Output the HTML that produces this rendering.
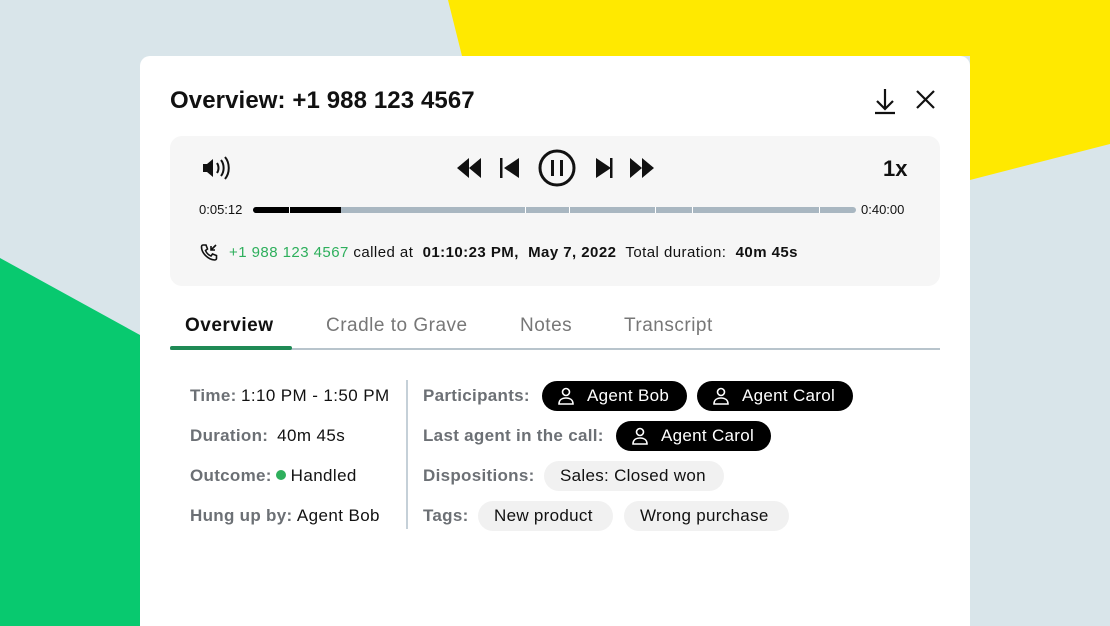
<!DOCTYPE html>
<html><head><style>
*{margin:0;padding:0;box-sizing:border-box}
html,body{width:1110px;height:626px;overflow:hidden}
body{position:relative;background:#d9e5ea;font-family:"Liberation Sans",sans-serif;color:#111}
.a{position:absolute;white-space:nowrap}
.card{position:absolute;left:140px;top:56px;width:830px;height:570px;background:#fff;border-radius:10px 10px 0 0}
.lbl{color:#6c7075;font-weight:bold;font-size:17px;letter-spacing:0.3px}
.v{font-size:17px;color:#111;letter-spacing:0.4px}
.pill{position:absolute;height:30px;border-radius:15px;font-size:17px;line-height:30px;padding:0 16px;white-space:nowrap;letter-spacing:0.3px}
.dark{background:#000;color:#fff}
.light{background:#f1f1f1;color:#111}
.tab{position:absolute;top:315px;font-size:19px;color:#777;letter-spacing:0.5px}
</style></head><body>
<svg class="a" style="left:0;top:0" width="1110" height="626">
<polygon points="448,0 1110,0 1110,144 970,180 970,56 462,56" fill="#ffe900"/>
<polygon points="0,258 140,335 140,626 0,626" fill="#08c96f"/>
</svg>
<div class="card"></div>
<div class="a" style="left:170px;top:87px;font-size:24px;font-weight:bold;letter-spacing:0.1px">Overview: +1 988 123 4567</div>
<svg class="a" style="left:872px;top:86px" width="70" height="30" fill="none" stroke="#111" stroke-width="2.2">
<path d="M13 3v20M5 15l8 8 8-8M3 27h20"/>
<path d="M45 5l17 17M62 5L45 22"/>
</svg>
<div class="a" style="left:170px;top:136px;width:770px;height:150px;background:#f6f6f6;border-radius:12px"></div>
<svg class="a" style="left:200px;top:152px" width="32" height="32" fill="#111" stroke="#111" stroke-width="2">
<path d="M3 12h4l6-5v18l-6-5H3z" stroke="none"/>
<path d="M17 11c2 3 2 7 0 10M21 8c3.5 4.5 3.5 11.5 0 16M25 5c5 6 5 16 0 22" fill="none"/>
</svg>
<svg class="a" style="left:455px;top:146px" width="205" height="44" fill="#111">
<path d="M14 12v20L2 22zM26 12v20L14 22z"/>
<rect x="45" y="12" width="2.5" height="20"/><path d="M64 12v20L49 22z"/>
<circle cx="102" cy="22" r="17" fill="none" stroke="#111" stroke-width="3"/>
<rect x="96" y="14" width="3" height="16"/><rect x="105" y="14" width="3" height="16"/>
<path d="M141 12v20l15-10z"/><rect x="155" y="12" width="2.5" height="20"/>
<path d="M175 12v20l12-10zM187 12v20l12-10z"/>
</svg>
<div class="a" style="left:883px;top:156px;font-size:22px;font-weight:bold">1x</div>
<div class="a" style="left:199px;top:202px;font-size:13px">0:05:12</div>
<div class="a" style="left:861px;top:202px;font-size:13px">0:40:00</div>
<div class="a" style="left:253px;top:207px;width:603px;height:6px;border-radius:3px;background:#a9b7c1"></div>
<div class="a" style="left:253px;top:207px;width:88px;height:6px;border-radius:3px 0 0 3px;background:#000"></div>
<div class="a" style="left:289px;top:207px;width:1px;height:6px;background:#fff"></div>
<div class="a" style="left:525px;top:207px;width:1px;height:6px;background:#fff"></div>
<div class="a" style="left:569px;top:207px;width:1px;height:6px;background:#fff"></div>
<div class="a" style="left:655px;top:207px;width:1px;height:6px;background:#fff"></div>
<div class="a" style="left:692px;top:207px;width:1px;height:6px;background:#fff"></div>
<div class="a" style="left:819px;top:207px;width:1px;height:6px;background:#fff"></div>
<svg class="a" style="left:200px;top:243px" width="18" height="18" fill="none" stroke="#111" stroke-width="1.6">
<path d="M3 2l3 0 1.5 4-2 1.5c1 2.5 3 4.5 5.5 5.5l1.5-2 4 1.5v3c0 1-1 1.5-2 1.5C8 16.5 1.5 10 1.5 4c0-1 .5-2 1.5-2z"/>
<path d="M16 2l-5 5M11 3v4h4"/>
</svg>
<div class="a" style="left:229px;top:244px;font-size:15px;letter-spacing:0.45px"><span style="color:#2eaf5c">+1 988 123 4567</span>&nbsp;called at &nbsp;<b>01:10:23 PM, &nbsp;May 7, 2022</b>&nbsp; Total duration: &nbsp;<b>40m 45s</b></div>
<div class="tab" style="left:185px;color:#111;font-weight:bold">Overview</div>
<div class="tab" style="left:326px">Cradle to Grave</div>
<div class="tab" style="left:520px">Notes</div>
<div class="tab" style="left:624px">Transcript</div>
<div class="a" style="left:170px;top:348px;width:770px;height:2px;background:#b8c4cc"></div>
<div class="a" style="left:170px;top:346px;width:122px;height:4px;border-radius:2px;background:#1f8a55"></div>
<div class="a" style="left:406px;top:380px;width:2px;height:149px;background:#c5d0d8"></div>
<div class="a" style="left:190px;top:386px"><span class="lbl">Time:</span> <span class="v">1:10 PM - 1:50 PM</span></div>
<div class="a" style="left:190px;top:426px"><span class="lbl">Duration:</span>&nbsp; <span class="v">40m 45s</span></div>
<div class="a" style="left:190px;top:466px"><span class="lbl">Outcome:</span> <span style="display:inline-block;width:10px;height:10px;border-radius:5px;background:#2eaf5c;vertical-align:1px"></span> <span class="v">Handled</span></div>
<div class="a" style="left:190px;top:506px"><span class="lbl">Hung up by:</span> <span class="v">Agent Bob</span></div>
<div class="a lbl" style="left:423px;top:386px">Participants:</div>
<div class="a lbl" style="left:423px;top:426px">Last agent in the call:</div>
<div class="a lbl" style="left:423px;top:466px">Dispositions:</div>
<div class="a lbl" style="left:423px;top:506px">Tags:</div>
<div class="pill dark" style="left:542px;top:381px;width:145px;padding-left:45px">Agent Bob</div>
<div class="pill dark" style="left:697px;top:381px;width:156px;padding-left:45px">Agent Carol</div>
<div class="pill dark" style="left:616px;top:421px;width:155px;padding-left:45px">Agent Carol</div>
<svg class="a" style="left:556px;top:386px" width="20" height="20" fill="none" stroke="#fff" stroke-width="1.6"><circle cx="10" cy="6" r="3.5"/><path d="M3 18c0-4 3-6 7-6s7 2 7 6z"/></svg>
<svg class="a" style="left:711px;top:386px" width="20" height="20" fill="none" stroke="#fff" stroke-width="1.6"><circle cx="10" cy="6" r="3.5"/><path d="M3 18c0-4 3-6 7-6s7 2 7 6z"/></svg>
<svg class="a" style="left:630px;top:426px" width="20" height="20" fill="none" stroke="#fff" stroke-width="1.6"><circle cx="10" cy="6" r="3.5"/><path d="M3 18c0-4 3-6 7-6s7 2 7 6z"/></svg>
<div class="pill light" style="left:544px;top:461px;width:180px">Sales: Closed won</div>
<div class="pill light" style="left:478px;top:501px;width:135px">New product</div>
<div class="pill light" style="left:624px;top:501px;width:165px">Wrong purchase</div>
</body></html>
